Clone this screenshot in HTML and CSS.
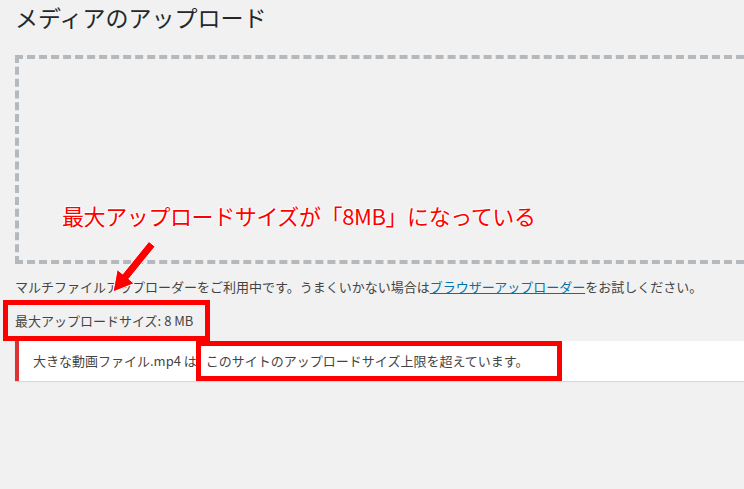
FILE: index.html
```html
<!DOCTYPE html>
<html lang="ja">
<head>
<meta charset="utf-8">
<title>メディアのアップロード</title>
<link rel="stylesheet" href="styles.css">
</head>
<body>
<div class="wrap">
  <h1 class="title">メディアのアップロード</h1>
  <div class="drop-area"></div>
  <p class="info">マルチファイルアップローダーをご利用中です。うまくいかない場合は<a href="#" class="link">ブラウザーアップローダー</a>をお試しください。</p>
  <p class="max-size"><span class="mark mark-size">最大アップロードサイズ: 8 MB</span></p>
  <div class="notice">
    <span class="file">大きな動画ファイル.mp4 は</span><span class="mark mark-error">このサイトのアップロードサイズ上限を超えています。</span>
  </div>

  <div class="callout">最大アップロードサイズが「8MB」になっている</div>
  <svg class="arrow" width="744" height="489" viewBox="0 0 744 489" aria-hidden="true">
    <polygon points="155.1,246.5 148.9,241.5 122.6,274 117.2,269.5 113,292 134.2,283.5 128.8,279" fill="#f00" stroke="#fff" stroke-width="1" stroke-linejoin="round"/>
  </svg>
</div>
</body>
</html>
```
FILE: styles.css
```css
html, body {
  margin: 0;
  padding: 0;
}
body {
  background: #f1f1f1;
  font-family: "Noto Sans CJK JP", "Noto Sans", sans-serif;
  font-size: 13px;
  color: #444;
  overflow: hidden;
  width: 744px;
  height: 489px;
}
.wrap {
  position: relative;
  padding-left: 15px;
  height: 489px;
}
.title {
  margin: 0;
  padding-top: 0;
  font-size: 23px;
  font-weight: 400;
  line-height: 34px;
  color: #23282d;
}
.drop-area {
  margin-top: 21px;
  height: 201px;
  border: 4px dashed #b4b9be;
  border-right: none;
}
.info {
  margin: 13px 0 0;
  line-height: 19px;
}
.link {
  color: #0073aa;
  text-decoration: underline;
}
.max-size {
  margin: 12px 0 0;
  line-height: 19px;
}
.mark {
  outline: 5px solid #f00;
}
.mark-size {
  display: inline-block;
  padding: 0 9px 0 4px;
  margin-left: -4px;
  outline-offset: 3px;
  line-height: 25px;
}
.notice {
  margin-top: 8px;
  height: 36px;
  background: #fff;
  border-left: 4px solid #dc3232;
  box-shadow: 0 1px 1px rgba(0, 0, 0, 0.1);
  padding: 2px 0 2px 14px;
  display: flex;
  align-items: center;
  line-height: 20px;
}
.file {
  margin-right: 5px;
}
.mark-error {
  display: inline-block;
  padding: 0 27px 0 4px;
  line-height: 28px;
  outline-offset: 1px;
}
.callout {
  position: absolute;
  left: 62px;
  top: 200px;
  font-size: 22px;
  letter-spacing: -0.4px;
  line-height: 30px;
  color: #f00;
  white-space: nowrap;
  text-shadow: 0 0 2px #fff, 0 0 2px #fff, 1px 1px 1px #fff, -1px -1px 1px #fff;
}
.arrow {
  position: absolute;
  left: 0;
  top: 0;
  pointer-events: none;
}
```
